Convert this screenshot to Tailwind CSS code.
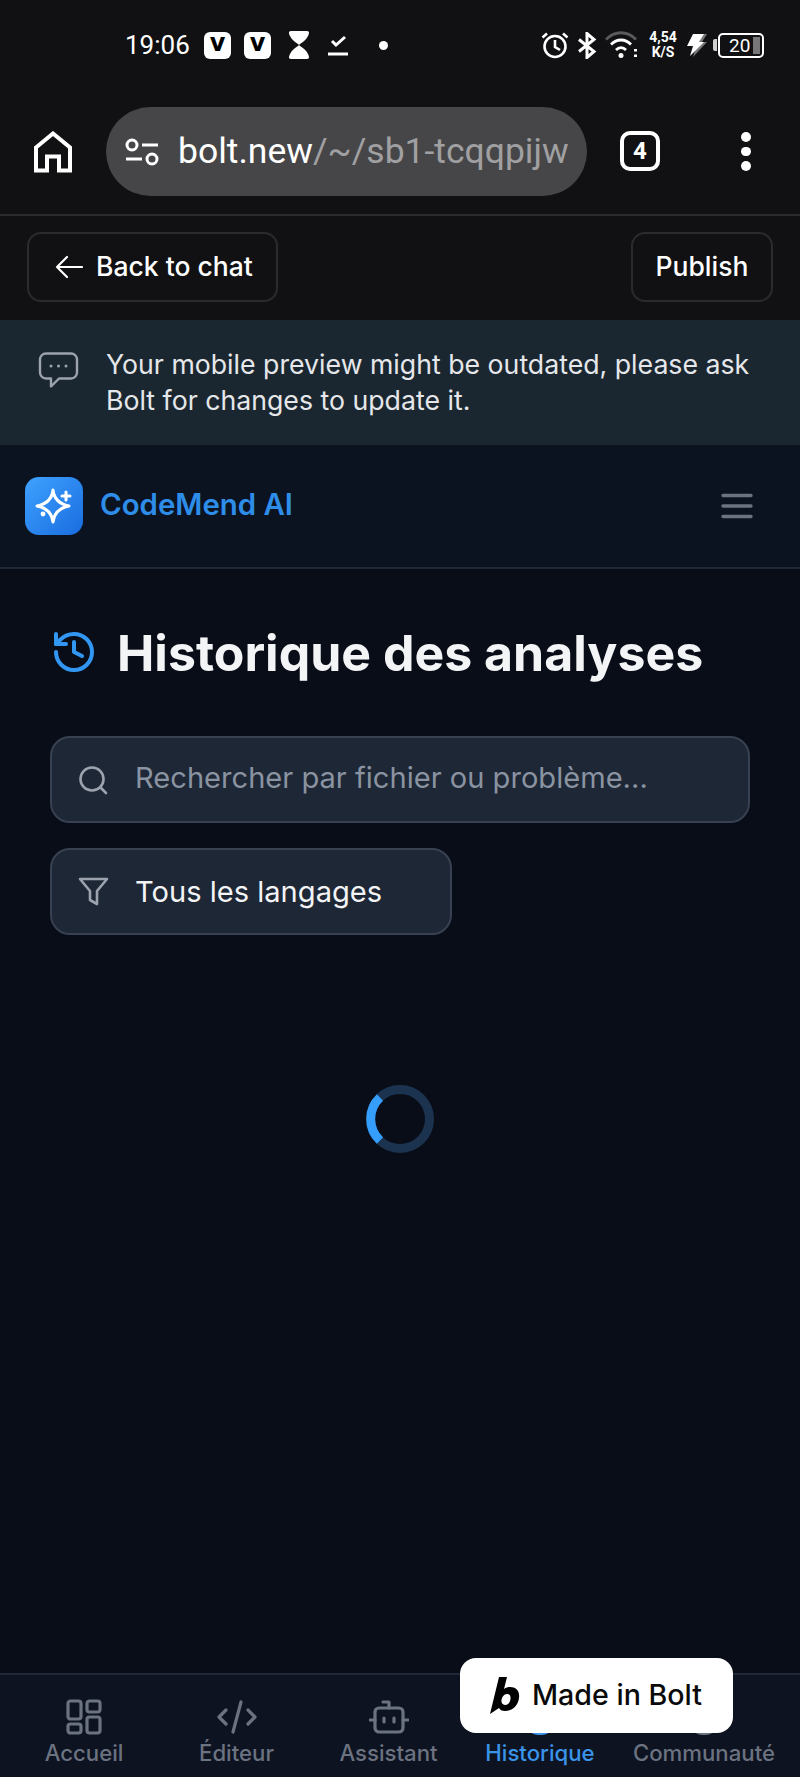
<!DOCTYPE html>
<html lang="en">
<head>
  <meta charset="UTF-8" />
  <meta name="viewport" content="width=device-width, initial-scale=1.0" />
  <title>Historique - CodeMend AI</title>
  <script src="https://cdn.jsdelivr.net/npm/@tailwindcss/browser@4"></script>
</head>
<body class="bg-[#090d18] font-[Inter,sans-serif]">
  <div class="relative w-[800px] h-[1777px] flex flex-col overflow-hidden">

    <!-- phone status bar -->
    <div class="h-[90px] shrink-0 bg-[#111113] flex items-center justify-between pl-[125px] pr-[36px] text-white font-[Roboto,sans-serif]">
      <div class="flex items-center">
        <span class="text-[26px] w-[79px]">19:06</span>
        <div class="w-[27px] h-[27px] rounded-[6px] bg-white flex items-center justify-center text-black font-bold text-[24px] leading-none pb-[4px] font-[DejaVu_Sans,sans-serif]">v</div>
        <div class="w-[27px] h-[27px] rounded-[6px] bg-white flex items-center justify-center text-black font-bold text-[24px] leading-none pb-[4px] ml-[13px] font-[DejaVu_Sans,sans-serif]">v</div>
        <svg class="ml-[17px]" width="22" height="28" viewBox="0 0 22 28" fill="#fff"><path d="M3 0h16c3 0 2 3 1 5-2 4-5 6-8 8l-1 1 1 1c3 2 6 4 8 8 1 2 2 5-1 5H3c-3 0-2-3-1-5 2-4 5-6 8-8l1-1-1-1C7 11 4 9 2 5 1 3 0 0 3 0z"/></svg>
        <svg class="ml-[18px]" width="21" height="26" viewBox="0 0 21 26" fill="none" stroke="#fff" stroke-width="3"><path d="M4 9l4 4 9-8"/><path d="M0 22h20"/></svg>
        <div class="w-[9px] h-[9px] rounded-full bg-white ml-[30px]"></div>
      </div>
      <div class="flex items-center">
        <svg width="28" height="28" viewBox="0 0 28 28" fill="none" stroke="#fff" stroke-width="2.600"><circle cx="14" cy="15.500" r="10.500"/><path d="M14 9v7l5 3"/><path d="M1.500 6.500L6 2.500M26.500 6.500L22 2.500"/></svg>
        <svg class="ml-[8px]" width="20" height="27" viewBox="0 0 20 27" fill="none" stroke="#fff" stroke-width="3"><path d="M2 7.500l15 12-7 6V1.500l7 6-15 12"/></svg>
        <svg class="ml-[8px]" width="34" height="28" viewBox="0 0 34 28" fill="none" stroke-width="2.800"><path d="M1 8.500c9-9 21-9 30 0" stroke="#5a5a5c"/><path d="M6 13.500c6-6 14-6 20 0" stroke="#fff"/><path d="M11 19c3-3 7-3 10 0" stroke="#fff"/><circle cx="16" cy="24.500" r="2.500" fill="#fff" stroke="none"/><rect x="29" y="18" width="3" height="2.500" fill="#fff" stroke="none"/><rect x="29" y="23.500" width="3" height="2.500" fill="#fff" stroke="none"/></svg>
        <div class="ml-[9px] w-[30px] flex flex-col items-center text-[14px] leading-[15px] font-bold"><span>4,54</span><span>K/S</span></div>
        <svg class="ml-[8px]" width="22" height="24" viewBox="0 0 22 24"><path d="M10 1h11l-5 8h5L7 24l3-11H6z" fill="#77777a"/><path d="M7 1h11l-5 8h5L4 23l3-10H1z" fill="#fff"/></svg>
        <div class="ml-[5px] w-[4px] h-[12px] bg-white/80 rounded-l-[2px]"></div>
        <div class="ml-[1px] w-[46px] h-[25px] rounded-[5px] border-2 border-white flex items-center pl-[9px] pr-[2px] justify-between">
          <span class="text-[19px] leading-none">20</span>
          <div class="w-[7px] h-[17px] bg-[#77777a]"></div>
        </div>
      </div>
    </div>

    <!-- browser toolbar -->
    <div class="h-[126px] shrink-0 bg-[#111113] border-b-2 border-[#2b2b2d] flex items-start pt-[17px] font-[Roboto,sans-serif]">
      <div class="w-[106px] h-[89px] flex items-center justify-center shrink-0">
        <svg width="38" height="42" viewBox="0 0 38 42" fill="none" stroke="#fff" stroke-width="4"><path d="M2 16.500L19 2.500l17 14V39.500H25V25.500H13V39.500H2z"/></svg>
      </div>
      <div class="w-[481px] h-[89px] rounded-full bg-[#464648] flex items-center pl-[19px] shrink-0">
        <svg class="shrink-0" width="34" height="28" viewBox="0 0 34 28" fill="none" stroke="#fff" stroke-width="3"><circle cx="7" cy="7" r="5"/><path d="M17 7h16M1 21h16"/><circle cx="27" cy="21" r="5"/></svg>
        <span class="ml-[19px] text-[35.500px] leading-none text-white whitespace-nowrap">bolt.new<span class="text-[#a0a0a2]">/~/sb1-tcqqpijw</span></span>
      </div>
      <div class="ml-[33px] w-[40px] h-[40px] mt-[24px] rounded-[10px] border-[4px] border-white flex items-center justify-center text-white text-[24px] font-bold leading-none shrink-0">4</div>
      <div class="ml-[81px] mt-[25px] flex flex-col gap-[5px] shrink-0">
        <div class="w-[9.500px] h-[9.500px] rounded-full bg-white"></div>
        <div class="w-[9.500px] h-[9.500px] rounded-full bg-white"></div>
        <div class="w-[9.500px] h-[9.500px] rounded-full bg-white"></div>
      </div>
    </div>

    <!-- bolt bar -->
    <div class="h-[104px] shrink-0 bg-[#111113] flex items-start justify-between pt-[16px] pl-[27px] pr-[27px]">
      <button class="w-[251px] h-[70px] rounded-[14px] border-2 border-[#2b2b2d] flex items-center pl-[26px] text-white text-[26.500px] font-medium">
        <svg width="28" height="24" viewBox="0 0 28 24" fill="none" stroke="#fff" stroke-width="2.200" stroke-linecap="round" stroke-linejoin="round"><path d="M27 12H2M12 2L2 12l10 10"/></svg>
        <span class="ml-[13px]">Back to chat</span>
      </button>
      <button class="w-[142px] h-[70px] rounded-[14px] border-2 border-[#2b2b2d] text-white text-[26.500px] font-medium">Publish</button>
    </div>

    <!-- outdated banner -->
    <div class="h-[125px] shrink-0 bg-[#1b2730] flex pl-[38px] pt-[26px]">
      <svg class="mt-[6px] shrink-0" width="41" height="37" viewBox="0 0 41 37" fill="none" stroke="#9ca3af" stroke-width="2.400" stroke-linejoin="round"><path d="M8 1.500h25a6 6 0 016 6v13a6 6 0 01-6 6H21l-8 8v-8H8a6 6 0 01-6-6v-13a6 6 0 016-6z"/><circle cx="13" cy="14" r="1.500" fill="#9ca3af" stroke="none"/><circle cx="20.500" cy="14" r="1.500" fill="#9ca3af" stroke="none"/><circle cx="28" cy="14" r="1.500" fill="#9ca3af" stroke="none"/></svg>
      <p class="ml-[27px] text-[26.700px] leading-[36px] text-[#e5e7eb] w-[670px]">Your mobile preview might be outdated, please ask Bolt for changes to update it.</p>
    </div>

    <!-- app header -->
    <div class="h-[124px] shrink-0 bg-[#0c1320] border-b-2 border-[#1f2937] flex items-center justify-between pl-[25px] pr-[47px]">
      <div class="flex items-center gap-[17px]">
        <div class="w-[58px] h-[58px] rounded-[14px] bg-linear-to-br from-[#3fa2ff] to-[#1a6cdf]">
          <svg width="58" height="58" viewBox="0 0 58 58" fill="none" stroke="#fff" stroke-width="3" stroke-linejoin="round"><path d="M28 13c1 9 6 14 16 16-10 2-15 7-16 16-1-9-6-14-16-16 10-2 15-7 16-16z"/><path d="M41 15v8M37 19h8" stroke-linecap="round"/><circle cx="18" cy="37" r="2.400" fill="#fff" stroke="none"/></svg>
        </div>
        <span class="text-[29.400px] font-semibold text-[#2d8de8] mt-[-2px]">CodeMend AI</span>
      </div>
      <svg width="32" height="26" viewBox="0 0 32 26" fill="none" stroke="#6b7280" stroke-width="3.400" stroke-linecap="round"><path d="M2 2.500h28M2 13h28M2 23.500h28"/></svg>
    </div>

    <!-- page content -->
    <main class="flex-1 pl-[50px] pr-[50px] pt-[56px] bg-[#090d18]">
      <div class="flex items-center">
        <svg class="mt-[-3px]" width="48" height="48" viewBox="0 0 24 24" fill="none" stroke="#3197f3" stroke-width="2" stroke-linecap="round" stroke-linejoin="round"><path d="M3 12a9 9 0 1 0 9-9 9.750 9.750 0 0 0-6.740 2.740L3 8"/><path d="M3 3v5h5"/><path d="M12 7v5l4 2"/></svg>
        <h1 class="ml-[19px] text-[50px] leading-[56px] font-bold text-[#f3f4f6] whitespace-nowrap">Historique des analyses</h1>
      </div>
      <div class="mt-[55px] h-[87px] rounded-[20px] bg-[#1e2735] border-2 border-[#374151] flex items-center pl-[26px]">
        <svg width="30" height="30" viewBox="0 0 30 30" fill="none" stroke="#9ca3af" stroke-width="2.600" stroke-linecap="round"><circle cx="14" cy="14" r="11.500"/><path d="M22.500 22.500l5.500 5.500"/></svg>
        <span class="ml-[27px] mt-[-4px] text-[29.100px] text-[#8a93a1]">Rechercher par fichier ou problème...</span>
      </div>
      <div class="mt-[25px] w-[402px] h-[87px] rounded-[20px] bg-[#1e2735] border-2 border-[#374151] flex items-center pl-[26px]">
        <svg width="31" height="29" viewBox="0 0 31 29" fill="none" stroke="#9ca3af" stroke-width="2.600" stroke-linejoin="round"><path d="M2 2h27L19 14v13l-7-4v-9z"/></svg>
        <span class="ml-[26px] text-[29.100px] text-[#f3f4f6]">Tous les langages</span>
      </div>
      <div class="mt-[150px] flex justify-center">
        <svg width="68" height="68" viewBox="0 0 68 68" fill="none" stroke-width="9"><circle cx="34" cy="34" r="29.500" stroke="#1c3350"/><path d="M14 12.500A29.500 29.500 0 0 0 14 55.500" stroke="#359dfa"/></svg>
      </div>
    </main>

    <!-- bottom nav -->
    <nav class="h-[104px] shrink-0 bg-[#0d1320] border-t-2 border-[#1f2937] flex text-[22.200px] leading-[28px] font-medium text-[#6b7280]">
      <div class="w-[168px] flex flex-col items-center pt-[24px]">
        <svg width="36" height="36" viewBox="0 0 36 36" fill="none" stroke="#6b7280" stroke-width="3.200"><rect x="2" y="2" width="13" height="18" rx="2.500"/><rect x="21" y="2" width="13" height="11" rx="2.500"/><rect x="21" y="18" width="13" height="16" rx="2.500"/><rect x="2" y="25" width="13" height="9" rx="2.500"/></svg>
        <span class="mt-[4px]">Accueil</span>
      </div>
      <div class="w-[137px] flex flex-col items-center pt-[24px]">
        <svg width="40" height="36" viewBox="0 0 40 36" fill="none" stroke="#6b7280" stroke-width="3.200" stroke-linecap="round" stroke-linejoin="round"><path d="M9 11l-7 7 7 7M31 11l7 7-7 7M24 3l-8 30"/></svg>
        <span class="mt-[4px]">Éditeur</span>
      </div>
      <div class="w-[167px] flex flex-col items-center pt-[24px]">
        <svg width="40" height="36" viewBox="0 0 40 36" fill="none" stroke="#6b7280" stroke-width="3.200" stroke-linecap="round" stroke-linejoin="round"><path d="M20 9V3h-6"/><rect x="6" y="9" width="28" height="24" rx="4"/><path d="M1 21h5M34 21h5M15 19v4M25 19v4"/></svg>
        <span class="mt-[4px]">Assistant</span>
      </div>
      <div class="w-[136px] flex flex-col items-center pt-[24px] text-[#3a94ea]">
        <svg width="36" height="36" viewBox="0 0 36 36" fill="none" stroke="#3a94ea" stroke-width="3.200"><circle cx="18" cy="18" r="16.500"/></svg>
        <span class="mt-[4px]">Historique</span>
      </div>
      <div class="flex-1 flex flex-col items-center pt-[24px]">
        <svg width="36" height="36" viewBox="0 0 36 36" fill="none" stroke="#6b7280" stroke-width="3.200"><circle cx="18" cy="18" r="16.500"/></svg>
        <span class="mt-[4px]">Communauté</span>
      </div>
    </nav>

    <!-- badge sits over the nav -->
    <div class="absolute left-[460px] top-[1658px] w-[273px] h-[75px] rounded-[16px] bg-white flex items-center pl-[30px]">
      <svg width="30" height="38" viewBox="0 0 30 38"><path fill-rule="evenodd" d="M9 0h8l-3 12c2-1.500 4-2 6-2 6 0 10 4 9 11-1 8-7 13-14 13-3 0-5-1-6-3L0 37zM17 17c-3 0-5 3-5.500 6-.5 3 1 5 3.500 5 3 0 5-2.500 5.500-6 .5-3-1-5-3.500-5z" fill="#000"/></svg>
      <span class="ml-[12px] text-[28.600px] font-medium text-[#0a0a0a] whitespace-nowrap">Made in Bolt</span>
    </div>
  </div>
</body>
</html>
